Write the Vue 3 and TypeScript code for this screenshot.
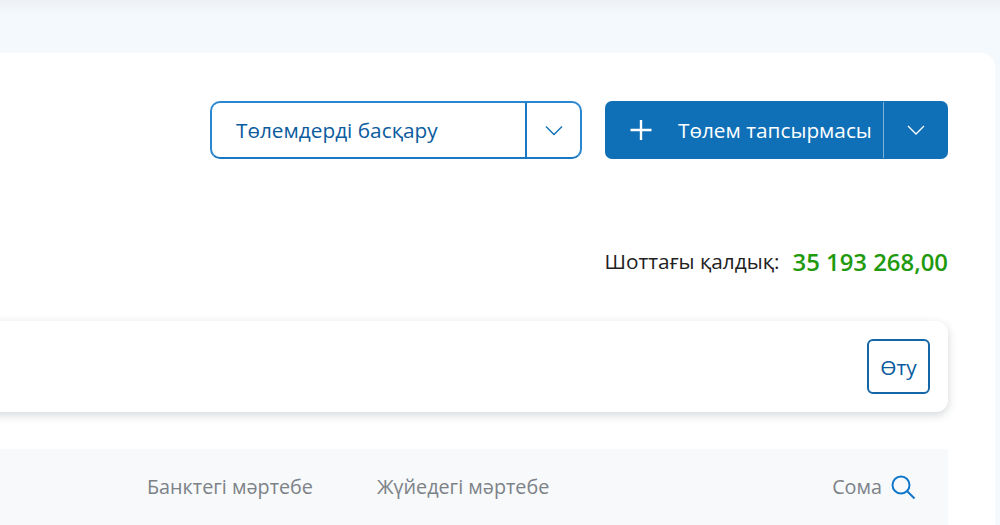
<script setup lang="ts">
const columns: string[] = ['Банктегі мәртебе', 'Жүйедегі мәртебе']
</script>

<template>
  <div class="page">
    <main class="panel">
      <div class="actions">
        <div class="select">
          <span class="select-label">Төлемдерді басқару</span>
          <span class="select-arrow">
            <svg width="18" height="11" viewBox="0 0 18 11"><path d="M1 1.500l8 8 8-8" fill="none" stroke="#0f70b7" stroke-width="1.400" /></svg>
          </span>
        </div>
        <div class="primary">
          <svg class="plus" width="24" height="24" viewBox="0 0 24 24"><path d="M12 2v20M1.500 12h21" fill="none" stroke="#fff" stroke-width="2.400" /></svg>
          <span class="primary-label">Төлем тапсырмасы</span>
          <span class="primary-arrow">
            <svg width="18" height="10" viewBox="0 0 18 10"><path d="M1 1l8 8 8-8" fill="none" stroke="#fff" stroke-width="1.300" /></svg>
          </span>
        </div>
      </div>
      <div class="balance">
        <span class="balance-label">Шоттағы қалдық:</span>
        <span class="balance-value">35 193 268,00</span>
      </div>
      <div class="card">
        <button class="go" type="button">Өту</button>
      </div>
      <div class="thead">
        <span v-for="c in columns" :key="c" class="th">{{ c }}</span>
        <span class="th sum">Сома</span>
        <svg class="search" width="26" height="26" viewBox="0 0 26 26"><circle cx="11" cy="11" r="8.500" fill="none" stroke="#0f78cc" stroke-width="2" /><path d="M17 17l7.500 7.500" fill="none" stroke="#0f78cc" stroke-width="2" /></svg>
      </div>
    </main>
  </div>
</template>

<style>
html, body { margin: 0; background: #f4f9fe; }
</style>

<style scoped>
.page {
  height: 525px;
  overflow: hidden;
  padding-top: 53px;
  box-sizing: border-box;
  background: linear-gradient(#eff2f5 0, #eff2f5 3px, #f4f9fe 14px);
  font-family: "Open Sans", "Noto Sans", sans-serif;
}
.panel {
  margin-left: -20px;
  margin-right: 5px;
  padding: 48px 47px 0 0;
  height: 472px;
  box-sizing: border-box;
  background: #fff;
  border-radius: 14px 14px 0 0;
}
.actions {
  display: flex;
  justify-content: flex-end;
  gap: 23px;
  height: 58px;
}
.select {
  width: 372px;
  box-sizing: border-box;
  display: flex;
  border: 2px solid #2a86cf;
  border-bottom-color: #1a78c2;
  border-radius: 10px;
  color: #0b5c9e;
  font-size: 20.800px;
}
.select-label {
  flex: 1;
  padding-left: 24px;
  line-height: 54px;
  white-space: nowrap;
}
.select-arrow {
  width: 53px;
  border-left: 2px solid #1a78c2;
  display: flex;
  align-items: center;
  justify-content: center;
}
.primary {
  width: 343px;
  display: flex;
  align-items: center;
  background: #0f70b7;
  border-radius: 7px;
  color: #fff;
  font-size: 20.800px;
}
.plus { margin-left: 24px; }
.primary-label { margin-left: 25px; white-space: nowrap; }
.primary-arrow {
  margin-left: auto;
  width: 64px;
  height: 56px;
  border-left: 1px solid #7fb2d8;
  display: flex;
  align-items: center;
  justify-content: center;
}
.balance {
  margin-top: 86px;
  height: 32px;
  display: flex;
  justify-content: flex-end;
  align-items: center;
  gap: 13px;
}
.balance-label { font-size: 20.800px; color: #222; }
.balance-value { font-size: 23.900px; font-weight: 600; color: #1f9a0f; }
.card {
  margin-top: 44px;
  height: 91px;
  box-sizing: border-box;
  background: #fff;
  border-radius: 12px;
  box-shadow: 0 3px 10px rgba(40, 50, 60, 0.2);
  display: flex;
  justify-content: flex-end;
  align-items: center;
  padding-right: 18px;
}
.go {
  width: 63px;
  height: 55px;
  background: #fff;
  border: 2px solid #1566a6;
  border-radius: 6px;
  color: #0b5c9e;
  font: 20.800px "Open Sans", sans-serif;
  padding: 0;
}
.thead {
  margin-top: 37px;
  height: 76px;
  background: #f7f9fb;
  display: flex;
  align-items: flex-start;
  padding: 24px 32px 0 167px;
  box-sizing: border-box;
  color: #7d8287;
  font-size: 19.800px;
}
.th { line-height: 28px; margin-right: 64px; white-space: nowrap; }
.th.sum { margin-left: auto; margin-right: 8px; }
.search { flex: none; margin-top: 1px; }
</style>
